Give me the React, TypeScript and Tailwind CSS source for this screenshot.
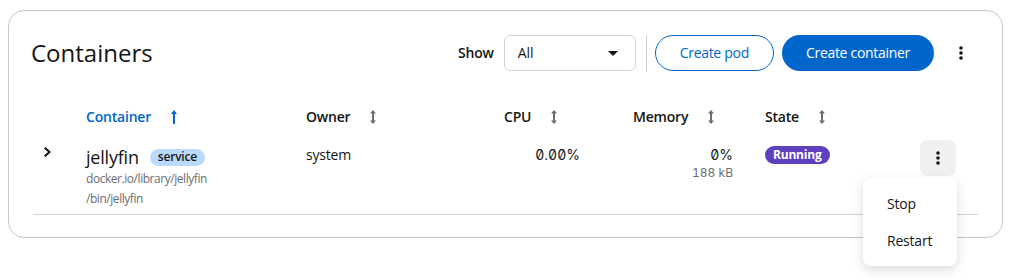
import { ReactNode } from "react";

function Kebab() {
  return (
    <svg width="4" height="14" viewBox="0 0 4 14" fill="#151515">
      <circle cx="2" cy="2" r="1.8" />
      <circle cx="2" cy="7" r="1.8" />
      <circle cx="2" cy="12" r="1.8" />
    </svg>
  );
}

function SortBoth() {
  return (
    <svg width="6" height="14" viewBox="0 0 6 14" fill="#6a6e73">
      <path d="M3 0 L6 3.5 H4 V10.5 H6 L3 14 L0 10.5 H2 V3.5 H0 Z" />
    </svg>
  );
}

function SortUp() {
  return (
    <svg width="6" height="14" viewBox="0 0 6 14" fill="#0066cc">
      <path d="M3 0 L6 4 H4 V14 H2 V4 H0 Z" />
    </svg>
  );
}

function Th({ children, w, active, icon }: { children: ReactNode; w: string; active?: boolean; icon: ReactNode }) {
  return (
    <div className={`${w} flex items-center gap-[20px] text-sm font-semibold tracking-[-0.2px] ${active ? "text-[#0066cc]" : "text-[#151515]"}`}>
      <span>{children}</span>
      {icon}
    </div>
  );
}

export default function App() {
  return (
    <div className="bg-white h-[280px] pt-[10px] pl-2" style={{ fontFamily: '"Open Sans", sans-serif' }}>
      <div className="w-[995px] h-[228px] rounded-2xl border border-[#c7c7c7] px-6 pt-6 text-[#151515]">
        <div className="flex items-center h-9">
          <h1 className="text-2xl flex-1 -ml-[2px]">Containers</h1>
          <span className="text-sm font-semibold mr-[10px] tracking-[-0.2px]">Show</span>
          <div className="w-[132px] h-9 rounded-md border border-[#d2d2d2] flex items-center justify-between pl-[13px] pr-[17px] text-sm">
            <span>All</span>
            <svg width="10" height="5" viewBox="0 0 10 5" fill="#151515">
              <path d="M0 0 H10 L5 5 Z" />
            </svg>
          </div>
          <div className="w-px h-[37px] bg-[#d2d2d2] ml-[10px] mr-2" />
          <button className="h-9 px-6 rounded-full border border-[#0066cc] text-[#0066cc] text-sm tracking-[-0.3px]">Create pod</button>
          <button className="h-9 px-6 ml-2 rounded-full bg-[#0066cc] text-white text-sm tracking-[-0.3px]">Create container</button>
          <button className="w-9 h-9 ml-[9px] -mr-[1px] flex items-center justify-center">
            <Kebab />
          </button>
        </div>

        <div className="flex items-center h-10 mt-[26px]">
          <div className="w-[53px]" />
          <Th w="w-[220px]" active icon={<SortUp />}>Container</Th>
          <Th w="w-[198px]" icon={<SortBoth />}>Owner</Th>
          <Th w="w-[129px]" icon={<SortBoth />}>CPU</Th>
          <Th w="w-[132px]" icon={<SortBoth />}>Memory</Th>
          <Th w="w-[155px]" icon={<SortBoth />}>State</Th>
        </div>

        <div className="flex border-b border-[#d2d2d2] pb-[5px] text-sm">
          <div className="w-[53px] pt-[10px] pl-[11px]">
            <svg width="7" height="10" viewBox="0 0 7 10" fill="#151515">
              <path d="M1.5 0 L7 5 L1.5 10 L0 8.5 L4 5 L0 1.5 Z" />
            </svg>
          </div>
          <div className="w-[220px] pt-2">
            <div className="flex items-center gap-[11px] h-6">
              <span className="text-lg tracking-[-0.2px]">jellyfin</span>
              <span className="rounded-full bg-[#b9dafc] px-2 h-[17px] flex items-center text-xs font-semibold text-[#151515] tracking-[-0.2px]">service</span>
            </div>
            <div className="text-xs leading-5 text-[#6a6e73] tracking-[-0.45px]">docker.io/library/jellyfin</div>
            <div className="text-xs leading-5 text-[#6a6e73] tracking-[-0.45px]">/bin/jellyfin</div>
          </div>
          <div className="w-[198px] pt-2 leading-5 tracking-[-0.2px]">system</div>
          <div className="w-[129px] pt-2 pr-[53px] text-right leading-5 slashed-zero tabular-nums" style={{ fontFamily: "Inter, sans-serif" }}>0.00%</div>
          <div className="w-[132px] pt-2 pr-[32px] text-right slashed-zero tabular-nums" style={{ fontFamily: "Inter, sans-serif" }}>
            <div className="leading-5">0%</div>
            <div className="text-xs leading-4 text-[#6a6e73]">188 kB</div>
          </div>
          <div className="w-[155px] pt-2">
            <div className="h-5 flex items-center">
              <span className="rounded-full bg-[#5e40be] text-white text-xs font-bold px-2 h-[18px] flex items-center tracking-[-0.2px]">Running</span>
            </div>
          </div>
          <div className="relative mt-[3px]">
            <button className="w-9 h-9 rounded-lg bg-[#f0f0f0] flex items-center justify-center">
              <Kebab />
            </button>
            <div className="absolute right-[-1px] top-[38px] w-[94px] bg-white rounded-lg shadow-[0_4px_12px_rgba(3,3,3,0.14)] py-[7px] z-10">
              <div className="h-[37px] flex items-center px-6 tracking-[-0.2px]">Stop</div>
              <div className="h-[37px] flex items-center px-6 tracking-[-0.2px]">Restart</div>
            </div>
          </div>
        </div>
      </div>
    </div>
  );
}
